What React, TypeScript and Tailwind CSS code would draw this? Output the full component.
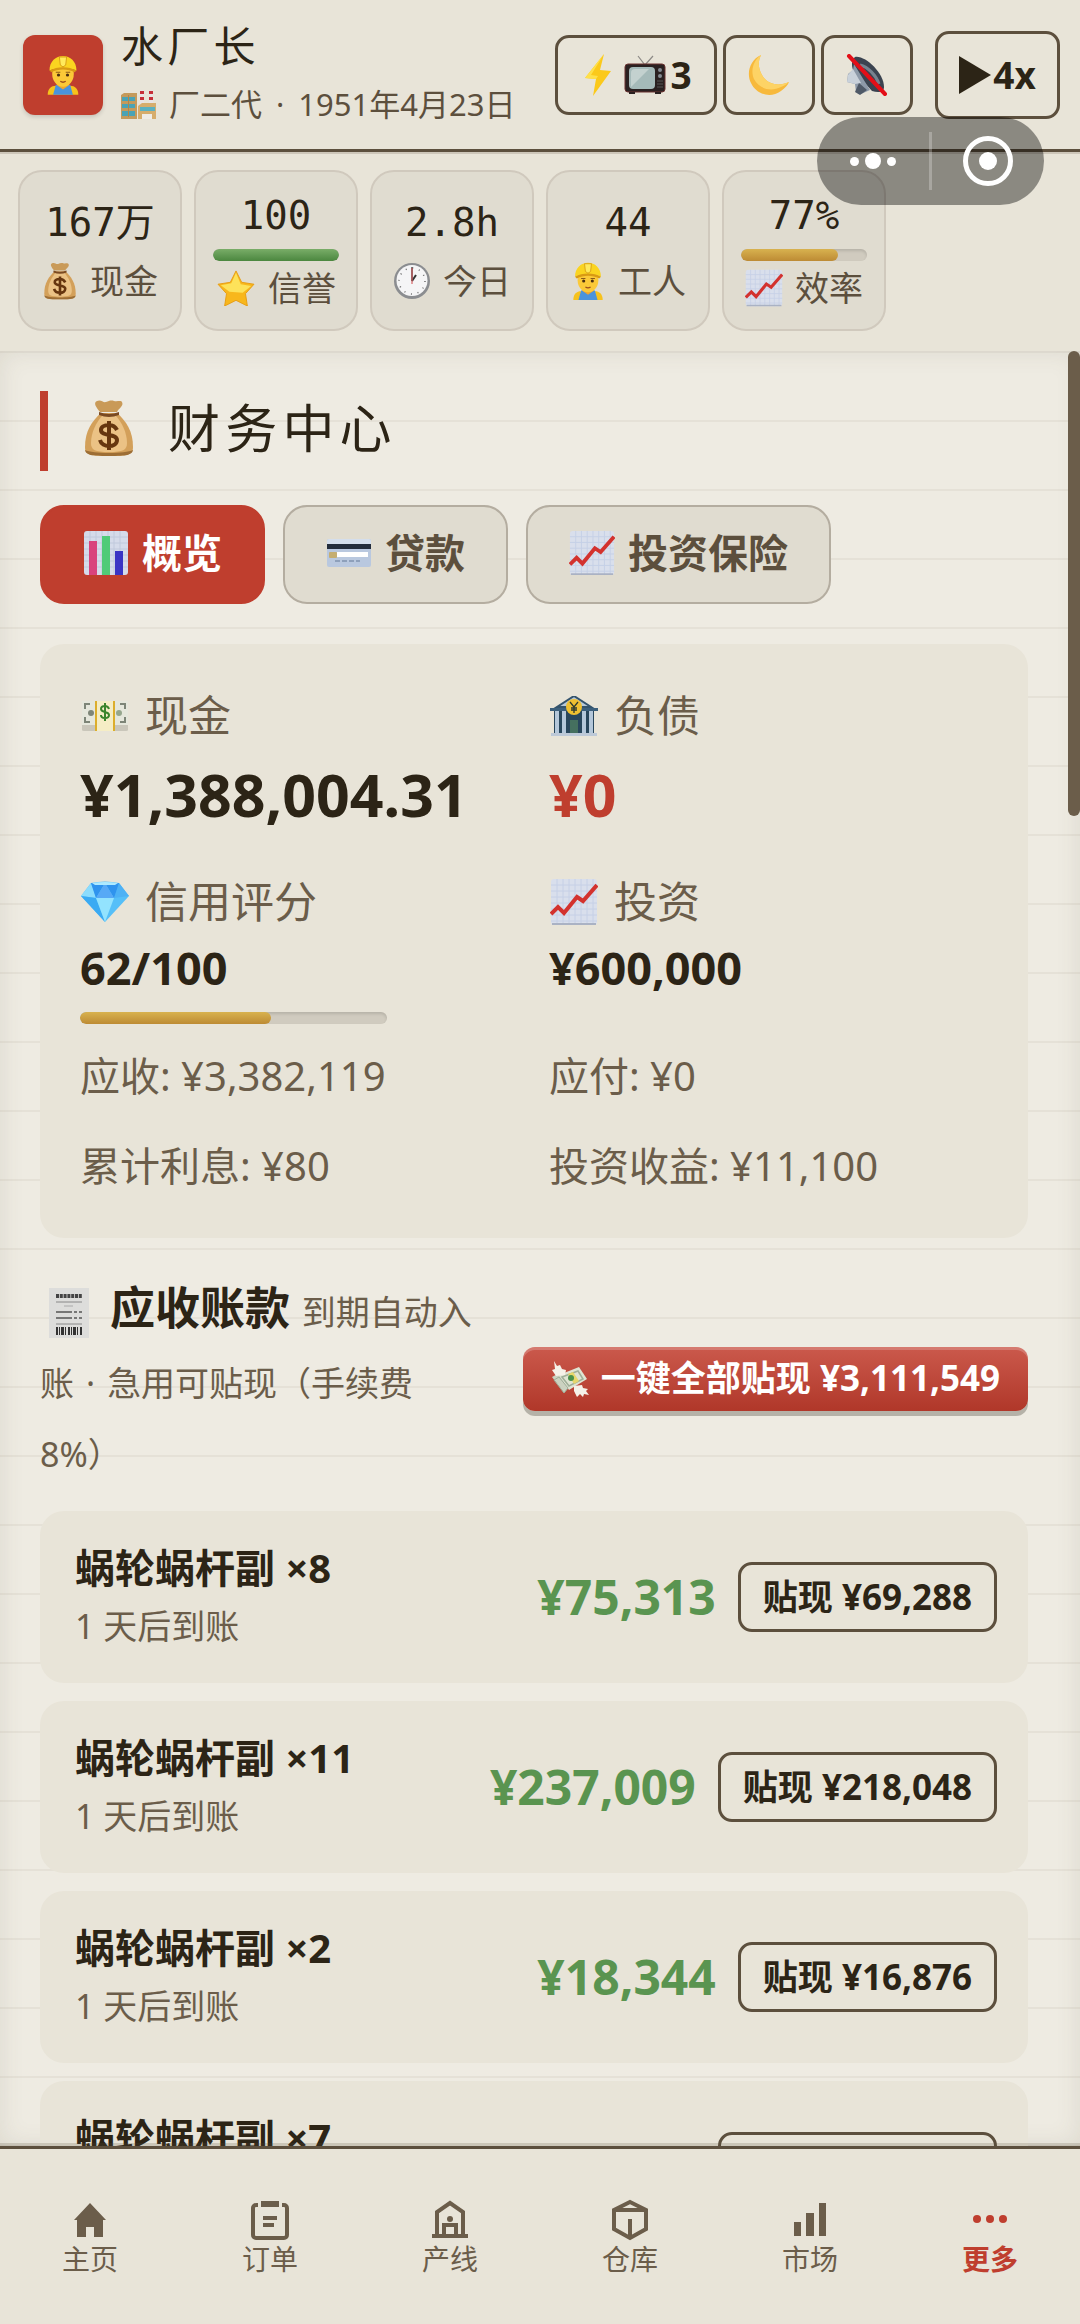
import type { ReactNode } from "react";

type IconProps = { className?: string };

const WorkerIcon = ({ className }: IconProps) => (
  <svg viewBox="0 0 40 44" className={className} aria-hidden="true">
    <path d="M3 44c0-7 4-10 9-10h16c5 0 9 3 9 10z" fill="#f6c21d" />
    <path d="M9 44l3-11h16l3 11z" fill="#4a93dc" />
    <path d="M13 33l7 5 7-5v-3H13z" fill="#f0a72b" />
    <ellipse cx="20" cy="21" rx="12" ry="14" fill="#fbc938" />
    <path d="M5 17C5 7 12 1 20 1s15 6 15 16l-3-1c-8-3-16-3-24 0z" fill="#fad420" />
    <path d="M16 2h8l-1 9-3 2-3-2z" fill="#ffea5c" stroke="#d79b12" strokeWidth="1" />
    <path d="M5 17c9-5 21-5 30 0l-2 2c-8-4-18-4-26 0z" fill="#d99a13" />
    <circle cx="15" cy="22" r="1.8" fill="#4b2f12" />
    <circle cx="25" cy="22" r="1.8" fill="#4b2f12" />
    <path d="M12 19h5M23 19h5" stroke="#8a5a18" strokeWidth="1.2" />
    <path d="M17 29q3 2 6 0" stroke="#9a4d1c" strokeWidth="1.5" fill="none" />
  </svg>
);

const FactoryIcon = ({ className }: IconProps) => (
  <svg viewBox="0 0 36 30" className={className} aria-hidden="true">
    <path d="M19 1h4v15h-4zM28 1h4v15h-4z" fill="#e9e4e4" />
    <path d="M19 2h4v3h-4zM19 8h4v3h-4zM28 2h4v3h-4zM28 8h4v3h-4z" fill="#c62f39" />
    <path d="M0 6l3-2h13v26H0z" fill="#c49a5b" />
    <path d="M17 17l4-3h14v16H17z" fill="#d6ad6c" />
    <path d="M1 8h13v4H1zM1 15h13v4H1zM1 22h13v5H1z" fill="#4aa3b5" />
    <path d="M7 6h1v22H7z" fill="#b0874a" />
    <path d="M19 18h15v4H19z" fill="#5bb1c0" />
    <path d="M21 25h10v5H21z" fill="#efece6" />
  </svg>
);

const BoltIcon = ({ className }: IconProps) => (
  <svg viewBox="0 0 28 44" className={className} aria-hidden="true">
    <path d="M20 1L1 25l11 1-3 17 18-25-11-1z" fill="#fbc91b" />
    <path d="M20 1L1 25l11 1 2-3-7-1z" fill="#ffe04a" />
  </svg>
);

const TvIcon = ({ className }: IconProps) => (
  <svg viewBox="0 0 42 40" className={className} aria-hidden="true">
    <path d="M14 1l7 9 8-9" stroke="#8d8a86" strokeWidth="1.2" fill="none" />
    <rect x="1" y="9" width="40" height="28" rx="3" fill="#2a2121" stroke="#6a3230" />
    <rect x="5" y="12" width="26" height="22" rx="4" fill="#a5bab9" />
    <path d="M7 32V18q0-4 4-4h14z" fill="#c3d1cf" />
    <circle cx="36" cy="15" r="2" fill="#858b92" />
    <circle cx="36" cy="21" r="2" fill="#858b92" />
    <path d="M33 26h6M33 29h6M33 32h6" stroke="#555" />
    <path d="M5 38h6M31 38h6" stroke="#2a2121" strokeWidth="2" />
  </svg>
);

const MoonIcon = ({ className }: IconProps) => (
  <svg viewBox="0 0 42 42" className={className} aria-hidden="true">
    <path d="M13 1C2 6-2 19 3 29c5 11 19 16 30 8 4-3 7-6 8-9-11 5-22 2-27-7-4-7-4-14-1-20z" fill="#f7b93c" />
    <path d="M13 1C6 6 2 16 6 25c5 10 17 13 27 8 3-1 6-3 8-5-11 5-22 2-27-7-4-7-4-14-1-20z" fill="#fdd365" />
  </svg>
);

const MutedIcon = ({ className }: IconProps) => (
  <svg viewBox="0 0 42 42" className={className} aria-hidden="true">
    <path d="M9 3c10-2 29 16 29 30 0 5-5 6-12 4L7 16C5 10 6 5 9 3z" fill="#3b4350" />
    <path d="M8 10l16 26-9 4-5-2-1-8-8-2 1-8 5-4z" fill="#8d99a8" />
    <path d="M7 15l8 14-6 1-8-2 1-7z" fill="#c9d1da" />
    <path d="M13 29l8 7-7 5-5-3z" fill="#4f5967" />
    <path d="M14 11c8 2 16 10 19 19" stroke="#77828f" strokeWidth="3" fill="none" />
    <path d="M3 2l36 38" stroke="#e30f18" strokeWidth="4" strokeLinecap="round" />
  </svg>
);

const MoneyBagIcon = ({ className }: IconProps) => (
  <svg viewBox="0 0 50 58" className={className} aria-hidden="true">
    <path d="M16 13C12 8 9 4 13 2c4-2 6 2 9 1s5-2 8-1 7-1 8 1c2 4-3 6-5 10z" fill="#c99a58" />
    <path d="M17 14h16c9 8 16 18 16 34 0 8-5 9-24 9S1 56 1 48c0-16 7-26 16-34z" fill="#d3a05a" />
    <path d="M19 16h12c7 7 12 18 12 28 0 7-4 9-18 9S7 51 7 44c0-10 5-21 12-28z" fill="#ebc285" />
    <path d="M15 13q10 4 20 0v3q-10 4-20 0z" fill="#7a4a22" />
    <path d="M1 51c8 4 40 4 48 0-1 5-6 6-24 6S2 56 1 51z" fill="#9d6e35" />
    <path d="M33 31c-2-4-5-5-8-5-5 0-8 2-8 5 0 7 16 3 16 10 0 4-4 6-8 6s-8-2-9-6M25 22v29" stroke="#66360f" strokeWidth="4" fill="none" />
  </svg>
);

const StarIcon = ({ className }: IconProps) => (
  <svg viewBox="0 0 40 38" className={className} aria-hidden="true">
    <path d="M20 1l6 12 13 2-9 10 2 13-12-6-12 6 2-13L1 15l13-2z" fill="#f8b71c" strokeLinejoin="round" stroke="#e79d12" />
    <path d="M20 3l5 12 11 2-9 7-14-1-9-7 11-2z" fill="#fde25a" />
  </svg>
);

const ClockIcon = ({ className }: IconProps) => (
  <svg viewBox="0 0 38 38" className={className} aria-hidden="true">
    <circle cx="19" cy="19" r="18" fill="#8b8d90" />
    <circle cx="19" cy="18.5" r="15.5" fill="#f5f5f6" />
    <circle cx="19" cy="19" r="13" fill="none" stroke="#6a6a6a" strokeWidth="1.5" strokeDasharray="1 5.8" />
    <path d="M19 19l4-6" stroke="#333" strokeWidth="2" />
    <path d="M19 19V5" stroke="#555" strokeWidth="1.5" />
    <path d="M19 22V6" stroke="#d0464a" strokeWidth="1" />
  </svg>
);

const ChartUpIcon = ({ className }: IconProps) => (
  <svg viewBox="0 0 48 48" className={className} aria-hidden="true">
    <rect x="1" y="1" width="46" height="46" rx="3" fill="#d9dfec" />
    <path d="M7 1v46M13 1v46M19 1v46M25 1v46M31 1v46M37 1v46M43 1v46M1 7h46M1 13h46M1 19h46M1 25h46M1 31h46M1 37h46M1 43h46" stroke="#c6d0e6" strokeWidth="1" />
    <path d="M2 46h44" stroke="#aab2c4" strokeWidth="2" />
    <path d="M1 36l7-7 6 6 13-16 6 4L47 7" stroke="#d3322e" strokeWidth="4" fill="none" />
  </svg>
);

const BarChartIcon = ({ className }: IconProps) => (
  <svg viewBox="0 0 46 46" className={className} aria-hidden="true">
    <rect x="1" y="1" width="44" height="44" rx="3" fill="#d5dbea" />
    <path d="M7 1v44M13 1v44M19 1v44M25 1v44M31 1v44M37 1v44M1 7h44M1 13h44M1 19h44M1 25h44M1 31h44M1 37h44" stroke="#c0c9dc" strokeWidth="1" />
    <path d="M6 11h8v34H6z" fill="#d9437d" />
    <path d="M19 6h8v39h-8z" fill="#4fcb78" />
    <path d="M32 21h8v24h-8z" fill="#3a34c4" />
  </svg>
);

const CardIcon = ({ className }: IconProps) => (
  <svg viewBox="0 0 46 30" className={className} aria-hidden="true">
    <rect x="1" y="1" width="44" height="28" rx="2" fill="#b9c8df" />
    <path d="M1 3q0-2 2-2h40q2 0 2 2v3H1z" fill="#d4deec" />
    <path d="M1 6h44v5H1z" fill="#232d3c" />
    <path d="M11 14h31v5H11z" fill="#fff" />
    <rect x="3" y="14" width="8" height="6" rx="1" fill="#c5ae72" />
    <path d="M9 23h25" stroke="#8ea0bb" strokeWidth="2" strokeDasharray="5 2" />
  </svg>
);

const BanknoteIcon = ({ className }: IconProps) => (
  <svg viewBox="0 0 48 32" className={className} aria-hidden="true">
    <path d="M1 24h46v6q0 1-2 1H3q-2 0-2-1z" fill="#c9c6ba" />
    <rect x="1" y="1" width="46" height="24" fill="#e5e7dc" />
    <path d="M4 9V4h5M39 4h5v5M4 17v5h5M39 22h5v-5M18 4h12" fill="none" stroke="#7d8578" strokeWidth="2" />
    <circle cx="10" cy="13" r="3" fill="#7d8578" />
    <circle cx="38" cy="13" r="3" fill="#95a68d" />
    <path d="M14 1h19v30H14z" fill="#f5edc5" />
    <path d="M14 1h2v30h-2zM32 1h2v30h-2z" fill="#dcae2c" />
    <path d="M28 9q-1-3-4-3c-3 0-4 1-4 3 0 4 8 2 8 6 0 2-1 3-4 3s-4-1-4-3M24 3v18" stroke="#3a842b" strokeWidth="2" fill="none" />
  </svg>
);

const BankIcon = ({ className }: IconProps) => (
  <svg viewBox="0 0 48 40" className={className} aria-hidden="true">
    <path d="M1 37h46v3H1z" fill="#bdc9d8" />
    <path d="M4 15h40v22H4z" fill="#28465c" />
    <path d="M5 15h4v22H5zM12 15h4v22h-4zM32 15h4v22h-4zM39 15h4v22h-4z" fill="#b4c7da" />
    <path d="M0 12h48v3H0z" fill="#3b5f7c" />
    <path d="M24 0l17 11H7z" fill="#b7c8d8" stroke="#33536c" strokeWidth="2" />
    <path d="M20 24h8v13h-8z" fill="#45705f" />
    <circle cx="24" cy="11" r="8" fill="#eebf31" />
    <path d="M20 6l4 5 4-5M24 11v6M21 12h6M21 14h6" stroke="#2e3a30" strokeWidth="1.3" fill="none" />
  </svg>
);

const GemIcon = ({ className }: IconProps) => (
  <svg viewBox="0 0 50 42" className={className} aria-hidden="true">
    <path d="M11 2Q25-1 39 2l10 13-24 26L1 15z" fill="#55bff8" />
    <path d="M11 2l5 15L1 15z" fill="#8bdcfd" />
    <path d="M39 2l-5 15 15-2z" fill="#4db1f5" />
    <path d="M11 2h14l-9 15zM39 2H25l9 15z" fill="#2f93ee" />
    <path d="M25 2l-9 15h18z" fill="#57a9f6" />
    <path d="M16 17l9 24L1 15z" fill="#3aaaf3" />
    <path d="M16 17h18l-9 24z" fill="#93e3fe" />
    <path d="M12 2q13-2 26 0l-3 2H15z" fill="#aeeaff" />
  </svg>
);

const ReceiptIcon = ({ className }: IconProps) => (
  <svg viewBox="0 0 40 50" className={className} aria-hidden="true">
    <path d="M0 0h40v50H0z" fill="#dddddb" />
    <path d="M7 8h26" stroke="#444" strokeWidth="4" strokeDasharray="3 .8" />
    <path d="M7 14h26M7 36h26" stroke="#888" />
    <path d="M15 18h9" stroke="#aaa" />
    <path d="M7 24h16M25 24h3M30 24h3M7 30h16M25 30h3M30 30h3" stroke="#555" strokeWidth="1.3" />
    <path d="M7 43h27" stroke="#333" strokeWidth="8" strokeDasharray="2 1 1 1 3 1 1 2" />
  </svg>
);

const WingsIcon = ({ className }: IconProps) => (
  <svg viewBox="0 0 40 38" className={className} aria-hidden="true">
    <path d="M1 17l12 16 6-7-9-14z" fill="#cbd2c0" />
    <path d="M8 15L28 7l8 12-18 11z" fill="#dfe4d2" />
    <path d="M11 17L27 11l5 8-14 7z" fill="none" stroke="#9fae98" strokeWidth="1.5" />
    <path d="M17 14l5-2 6 9-5 3z" fill="#e6d76b" />
    <circle cx="20" cy="18" r="3" fill="#49914a" />
    <path d="M3 1l3 5 3-1 2 4 4 1-1 5-9 1-4-6 3-1z" fill="#f5f1e8" />
    <path d="M23 26l8-1 1 3 5 1-2 2 3 4-5-1-1 3-3-3-3 3-3-6z" fill="#f5f1e8" />
    <path d="M3 20l5-3 9 11-4 5z" fill="none" stroke="#9fae98" />
  </svg>
);

const stats = [
  { value: "167万", label: "现金", icon: <MoneyBagIcon className="h-[38px] w-9" /> },
  { value: "100", label: "信誉", icon: <StarIcon className="h-9 w-10" />, bar: 100, fill: "from-[#79ad68] to-[#4b873f]" },
  { value: "2.8h", label: "今日", icon: <ClockIcon className="size-[38px]" /> },
  { value: "44", label: "工人", icon: <WorkerIcon className="h-[38px] w-9" /> },
  { value: "77%", label: "效率", icon: <ChartUpIcon className="size-[38px]" />, bar: 77, fill: "from-[#d8b24f] to-[#bd8b34]" },
];

const tabs = [
  { label: "概览", icon: <BarChartIcon className="size-[46px]" />, active: true },
  { label: "贷款", icon: <CardIcon className="h-[30px] w-[46px]" /> },
  { label: "投资保险", icon: <ChartUpIcon className="size-[46px]" /> },
];

const receivables = [
  { name: "蜗轮蜗杆副 ×8", amount: "¥75,313", discount: "¥69,288" },
  { name: "蜗轮蜗杆副 ×11", amount: "¥237,009", discount: "¥218,048" },
  { name: "蜗轮蜗杆副 ×2", amount: "¥18,344", discount: "¥16,876" },
  { name: "蜗轮蜗杆副 ×7", amount: "¥151,632", discount: "¥139,501" },
];

const navItems = [
  {
    label: "主页",
    icon: <path d="M22 5l16 17h-3v17h-9V29h-8v10H9V22H6z" fill="currentColor" />,
  },
  {
    label: "订单",
    icon: (
      <>
        <path d="M10 7H8a3 3 0 0 0-3 3v27a3 3 0 0 0 3 3h28a3 3 0 0 0 3-3V10a3 3 0 0 0-3-3h-2" fill="none" stroke="currentColor" strokeWidth="4" />
        <path d="M13 3h18v6H13zM15 18h14v4H15zM15 25h11v4H15z" fill="currentColor" />
      </>
    ),
  },
  {
    label: "产线",
    icon: (
      <>
        <path d="M9 39V14l13-9 13 9v25" fill="none" stroke="currentColor" strokeWidth="4" />
        <path d="M4 38h36" stroke="currentColor" strokeWidth="4" />
        <path d="M16 38V27h12v11" fill="none" stroke="currentColor" strokeWidth="4" />
        <circle cx="22" cy="21" r="3" fill="currentColor" />
      </>
    ),
  },
  {
    label: "仓库",
    icon: <path d="M22 4l16 8v19l-16 9-16-9V12zM6 12h32M22 21v19" fill="none" stroke="currentColor" strokeWidth="4" />,
  },
  {
    label: "市场",
    icon: <path d="M6 24h7v14H6zM18 15h8v23h-8zM31 5h7v33h-7z" fill="currentColor" />,
  },
  {
    label: "更多",
    active: true,
    icon: (
      <>
        <circle cx="9" cy="21" r="4" fill="currentColor" />
        <circle cx="22" cy="21" r="4" fill="currentColor" />
        <circle cx="35" cy="21" r="4" fill="currentColor" />
      </>
    ),
  },
];

const ProgressBar = ({ value, fill }: { value: number; fill: string }) => (
  <div className="h-3 w-full overflow-hidden rounded-full bg-[#d0cbbf] shadow-[inset_0_2px_3px_rgba(0,0,0,0.12)]">
    <div className={`h-full rounded-full bg-linear-to-b ${fill}`} style={{ width: `${value}%` }} />
  </div>
);

const Header = () => (
  <header className="flex h-[152px] shrink-0 items-center justify-between border-b-3 border-[#5c4f3d] pr-5 pl-[23px] shadow-[0_2px_0_#cdc6b9]">
    <div className="flex items-center gap-[18px]">
      <div className="flex size-20 items-center justify-center rounded-xl bg-[#bf3e2e] shadow-[0_2px_4px_rgba(0,0,0,0.15)]">
        <WorkerIcon className="h-[46px] w-9" />
      </div>
      <div>
        <h1 className="text-[42px] leading-[58px] tracking-widest">水厂长</h1>
        <p className="flex items-center text-[31px] leading-[58px] whitespace-nowrap text-[#5c4f3d]">
          <FactoryIcon className="mr-3 h-[30px] w-9" />
          厂二代
          <span className="mx-3.5">·</span>
          1951年4月23日
        </p>
      </div>
    </div>
    <div className="flex items-center gap-1.5 text-[37px] font-bold">
      <button className="flex h-20 w-[162px] items-center justify-center rounded-[14px] border-3 border-[#5c4f3d] pl-1">
        <BoltIcon className="mr-3 h-11 w-7" />
        <TvIcon className="mr-1 h-10 w-[42px]" />3
      </button>
      <button aria-label="夜间模式" className="flex h-20 w-[92px] items-center justify-center rounded-[14px] border-3 border-[#5c4f3d]">
        <MoonIcon className="size-[42px]" />
      </button>
      <button aria-label="静音" className="flex h-20 w-[92px] items-center justify-center rounded-[14px] border-3 border-[#5c4f3d]">
        <MutedIcon className="size-[42px]" />
      </button>
      <button className="ml-4 flex h-[88px] w-[125px] items-center justify-center gap-0.5 rounded-[14px] border-3 border-[#5c4f3d]">
        <svg viewBox="0 0 32 38" className="h-[38px] w-8" aria-hidden="true">
          <path d="M0 0l32 19L0 38z" fill="#2c2416" />
        </svg>
        4x
      </button>
    </div>
  </header>
);

// mini-program menu that floats above the page
const Capsule = () => (
  <div className="absolute top-[117px] right-9 z-10 flex h-[88px] w-[227px] items-center rounded-full bg-black/40">
    <button aria-label="菜单" className="flex h-full flex-1 items-center justify-center gap-1.5">
      <span className="size-[9px] rounded-full bg-white" />
      <span className="size-4 rounded-full bg-white" />
      <span className="size-[9px] rounded-full bg-white" />
    </button>
    <span className="h-[58px] w-[3px] bg-white/25" />
    <button aria-label="关闭" className="flex h-full flex-1 items-center justify-center">
      <span className="flex size-[50px] items-center justify-center rounded-full border-[5px] border-white">
        <span className="size-[18px] rounded-full bg-white" />
      </span>
    </button>
  </div>
);

const Label = ({ icon, children }: { icon: ReactNode; children: ReactNode }) => (
  <div className="flex items-center gap-[15px] text-[43px] leading-[60px] text-[#6b5d4a]">
    <span className="flex w-[50px] justify-center">{icon}</span>
    {children}
  </div>
);

const Summary = () => (
  <section className="mt-10 rounded-3xl bg-[#e8e4d8] px-10 pt-[42px] pb-[42px]">
    <div className="grid grid-cols-2 gap-[30px]">
      <div>
        <Label icon={<BanknoteIcon className="h-8 w-12" />}>现金</Label>
        <p className="text-[59px] leading-[96px] font-bold">¥1,388,004.31</p>
      </div>
      <div>
        <Label icon={<BankIcon className="h-10 w-12" />}>负债</Label>
        <p className="text-[59px] leading-[96px] font-bold text-[#bf3e2e]">¥0</p>
      </div>
      <div>
        <Label icon={<GemIcon className="h-[42px] w-[50px]" />}>信用评分</Label>
        <p className="text-[45px] leading-[72px] font-bold">62/100</p>
        <div className="mt-2 w-7/10">
          <ProgressBar value={62} fill="from-[#d8b24f] to-[#bd8b34]" />
        </div>
      </div>
      <div>
        <Label icon={<ChartUpIcon className="size-12" />}>投资</Label>
        <p className="text-[45px] leading-[72px] font-bold">¥600,000</p>
      </div>
    </div>
    <div className="mt-[22px] grid grid-cols-2 gap-[30px] text-[40px] leading-[60px] text-[#6b5d4a]">
      <p>应收: ¥3,382,119</p>
      <p>应付: ¥0</p>
      <p>累计利息: ¥80</p>
      <p>投资收益: ¥11,100</p>
    </div>
  </section>
);

const Receivables = () => (
  <section className="mt-[34px]">
    <div className="flex items-center justify-between gap-5">
      <h3 className="max-w-[440px] text-[45px] leading-[71px] font-bold">
        <ReceiptIcon className="mr-[21px] ml-[9px] inline h-[50px] w-10 align-middle" />
        应收账款{" "}
        <small className="text-[34px] leading-none font-normal text-[#6b5d4a]">
          到期自动入账<span className="mx-3">·</span>急用可贴现（手续费
          <br />
          8%）
        </small>
      </h3>
      <button className="flex h-16 shrink-0 items-center gap-2.5 rounded-xl bg-linear-to-b from-[#cb594c] to-[#b03729] px-7 text-[35px] font-bold text-white shadow-[inset_0_3px_0_rgba(255,255,255,0.2),0_5px_0_#b5b2a8]">
        <WingsIcon className="h-[38px] w-10" />
        一键全部贴现 ¥3,111,549
      </button>
    </div>
    <ul className="mt-[26px] flex flex-col gap-[18px]">
      {receivables.map((item) => (
        <li key={item.name} className="flex items-center justify-between rounded-3xl bg-[#e8e4d8] py-7 pr-[31px] pl-[35px]">
          <div className="leading-[58px]">
            <p className="text-[40px] font-bold">{item.name}</p>
            <p className="text-[34px] text-[#6b5d4a]">1 天后到账</p>
          </div>
          <div className="flex items-center gap-[22px] font-bold">
            <span className="text-[48px] leading-[70px] text-[#5a9450]">{item.amount}</span>
            <button className="h-[70px] rounded-[14px] border-3 border-[#5c4f3d] px-[22px] text-[35px]">贴现 {item.discount}</button>
          </div>
        </li>
      ))}
    </ul>
  </section>
);

const App = () => {
  return (
    <div className="relative flex h-screen flex-col overflow-hidden bg-[#e8e4d8] font-['Noto_Sans','Noto_Sans_CJK_SC',sans-serif] text-[#2c2416]">
      <Header />
      <Capsule />
      <div className="flex shrink-0 gap-3 px-[18px] pt-[18px] pb-5">
        {stats.map((stat) => (
          <div key={stat.label} className="flex h-[161px] w-[164px] flex-col justify-center rounded-3xl border-2 border-[#d0c9bd] bg-[#e0dcd0] px-[17px] pb-0.5">
            <div className="text-center font-['DejaVu_Sans_Mono','Noto_Sans_CJK_SC',monospace] text-[39px] leading-[62px]">{stat.value}</div>
            {stat.bar && (
              <div className="mt-0.5">
                <ProgressBar value={stat.bar} fill={stat.fill} />
              </div>
            )}
            <div className="flex items-center justify-center gap-3 text-[34px] leading-[54px] whitespace-nowrap text-[#5c4f3d]">
              {stat.icon}
              {stat.label}
            </div>
          </div>
        ))}
      </div>
      <main className="flex min-h-0 flex-1 overflow-hidden bg-[#eeebe2] bg-[repeating-linear-gradient(#e5e1d7_0px,#e5e1d7_2px,transparent_2px,transparent_69px)] shadow-[inset_0_0_24px_rgba(90,80,60,0.12)]">
        <div className="min-w-0 flex-1 px-10 pt-10">
          <h2 className="flex h-20 items-center border-l-8 border-[#bf3e2e] pb-1.5 pl-9 text-[52px] tracking-widest">
            <MoneyBagIcon className="mr-[34px] h-[58px] w-[50px]" />
            财务中心
          </h2>
          <div className="mt-[34px] flex gap-[18px]">
            {tabs.map((tab) => (
              <button
                key={tab.label}
                className={`flex h-[99px] items-center gap-[13px] rounded-3xl border-2 px-[41px] pb-1 text-[40px] font-bold ${
                  tab.active ? "border-[#bf3e2e] bg-[#bf3e2e] text-white" : "border-[#b4ada0] bg-[#e0dcd0] text-[#5c4f3d]"
                }`}
              >
                {tab.icon}
                {tab.label}
              </button>
            ))}
          </div>
          <Summary />
          <Receivables />
        </div>
        <div className="w-3 shrink-0">
          <div className="h-[465px] rounded-full bg-[#6b5d4a]" />
        </div>
      </main>
      <nav className="z-10 grid h-[178px] shrink-0 grid-cols-6 border-t-3 border-[#5c4f3d] bg-[#e8e4d8] pt-[49px] shadow-[0_-3px_0_rgba(92,79,61,0.2)]">
        {navItems.map((item) => (
          <a
            key={item.label}
            href="#"
            className={`flex flex-col items-center gap-0.5 text-[28px] leading-[30px] ${item.active ? "font-bold text-[#bf3e2e]" : "text-[#6b5d4a]"}`}
          >
            <svg viewBox="0 0 44 44" className="size-11" aria-hidden="true">
              {item.icon}
            </svg>
            {item.label}
          </a>
        ))}
      </nav>
    </div>
  );
};

export default App;
